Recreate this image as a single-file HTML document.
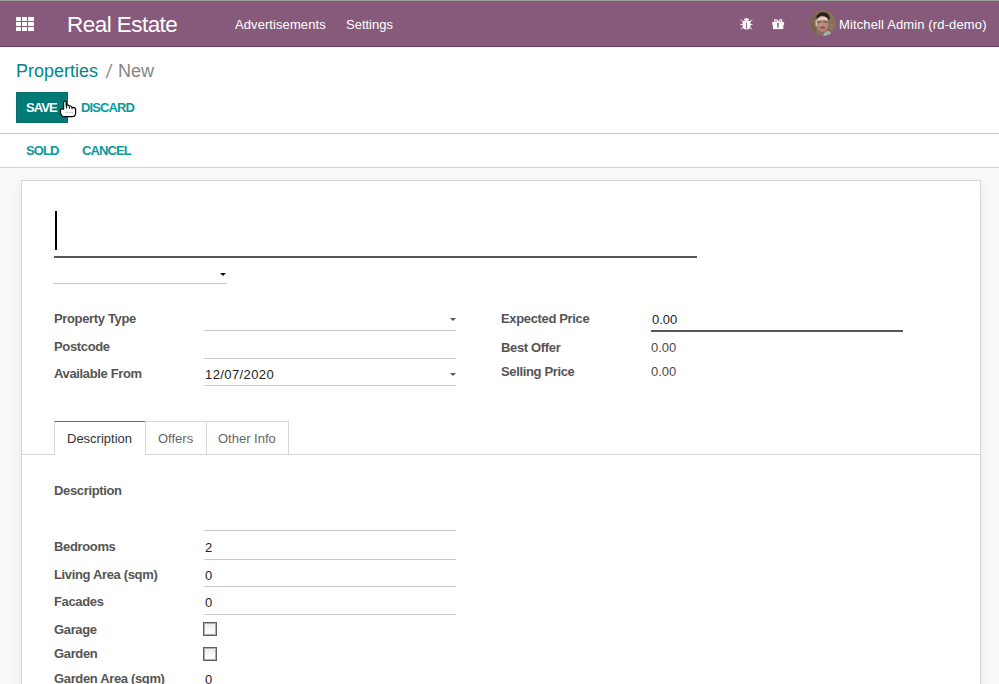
<!DOCTYPE html>
<html><head><meta charset="utf-8">
<style>
*{box-sizing:border-box;margin:0;padding:0}
html,body{width:999px;height:684px;overflow:hidden;background:#fff}
body{position:relative;font-family:"Liberation Sans",sans-serif;font-size:13px;color:#4c4c4c}
.a{position:absolute;white-space:nowrap;line-height:13px}
#topline{position:absolute;left:0;top:0;width:999px;height:1px;background:#9ba09b}
#nav{position:absolute;left:0;top:1px;width:999px;height:46px;background:#875A7B;border-bottom:1px solid #663f5c}
.gsq{position:absolute;background:#fff;width:5px;height:4px}
.navt{color:#fff}
#cp{position:absolute;left:0;top:47px;width:999px;height:87px;background:#fff;border-bottom:1px solid #c9c9c9}
#status{position:absolute;left:0;top:134px;width:999px;height:34px;background:#fff;border-bottom:1px solid #cfd4da}
#bg{position:absolute;left:0;top:168px;width:999px;height:516px;background:#f9f9f9}
#sheet{position:absolute;left:21px;top:180px;width:960px;height:520px;background:#fff;border:1px solid #d3d7dc;box-shadow:0 4px 10px rgba(0,0,0,0.08)}
.lbl{font-weight:bold;color:#555;letter-spacing:-0.35px}
.ln{position:absolute;height:1px;background:#c8c8c8}
.lnd{position:absolute;height:2px;background:#585858}
.caret{position:absolute;width:0;height:0;border-left:3px solid transparent;border-right:3px solid transparent;border-top:3px solid #555}
.val{color:#222}
.ro{color:#4c4c4c}
.teal{color:#01878a}
.teal2{color:#0a9a9c}
.chk{position:absolute;width:14px;height:14px;border:1px solid #5e5e5e;box-shadow:inset 0 0 0 1px #a9b0b6;background:linear-gradient(#e6e9ec,#fdfdfd 70%,#f5f6f7)}
</style></head><body>
<div id="topline"></div>
<div id="nav">
  <div class="gsq" style="left:16px;top:16px"></div>
  <div class="gsq" style="left:22px;top:16px"></div>
  <div class="gsq" style="left:28px;top:16px;width:6px"></div>
  <div class="gsq" style="left:16px;top:21px"></div>
  <div class="gsq" style="left:22px;top:21px"></div>
  <div class="gsq" style="left:28px;top:21px;width:6px"></div>
  <div class="gsq" style="left:16px;top:26px"></div>
  <div class="gsq" style="left:22px;top:26px"></div>
  <div class="gsq" style="left:28px;top:26px;width:6px"></div>
</div>
<div class="a navt" style="left:67px;top:14px;font-size:22.5px;line-height:22.5px;letter-spacing:-0.55px">Real Estate</div>
<div class="a navt" style="left:235px;top:18px;letter-spacing:0.08px">Advertisements</div>
<div class="a navt" style="left:346px;top:18px">Settings</div>
<div class="a navt" style="left:839px;top:18px;letter-spacing:0.13px">Mitchell Admin (rd-demo)</div>

<div id="cp"></div>
<div id="status"></div>
<div id="bg"></div>
<div id="sheet"></div>

<!-- breadcrumb -->
<div class="a teal" style="left:16px;top:62px;font-size:18px;line-height:18px">Properties</div>
<div class="a" style="left:105px;top:63px;font-size:18px;line-height:18px;color:#888;transform:skewX(-8deg) scaleY(1.08);transform-origin:0 100%">/</div>
<div class="a" style="left:118px;top:62px;font-size:18px;line-height:18px;color:#848484">New</div>

<!-- buttons -->
<div style="position:absolute;left:16px;top:92px;width:52px;height:31px;background:#007a74;border:1px solid #0b6a6c"></div>
<div class="a" style="left:26px;top:101px;color:#fff;font-weight:bold;letter-spacing:-0.9px">SAVE</div>
<div class="a teal2" style="left:81px;top:101px;font-weight:bold;letter-spacing:-0.9px">DISCARD</div>
<div class="a teal2" style="left:26px;top:144px;font-weight:bold;letter-spacing:-0.9px">SOLD</div>
<div class="a teal2" style="left:82px;top:144px;font-weight:bold;letter-spacing:-0.9px">CANCEL</div>

<!-- title -->
<div style="position:absolute;left:55px;top:211px;width:2px;height:39px;background:#000"></div>
<div class="lnd" style="left:54px;top:256px;width:643px"></div>
<div class="caret" style="left:220px;top:273px;border-top-color:#111"></div>
<div class="ln" style="left:54px;top:283px;width:172px"></div>

<!-- group left -->
<div class="a lbl" style="left:54px;top:312px">Property Type</div>
<div class="a lbl" style="left:54px;top:340px">Postcode</div>
<div class="a lbl" style="left:54px;top:367px">Available From</div>
<div class="caret" style="left:450px;top:318px"></div>
<div class="ln" style="left:204px;top:330px;width:252px"></div>
<div class="ln" style="left:204px;top:358px;width:252px"></div>
<div class="a val" style="left:205px;top:368px;letter-spacing:0.4px">12/07/2020</div>
<div class="caret" style="left:450px;top:373px"></div>
<div class="ln" style="left:204px;top:385px;width:252px"></div>

<!-- group right -->
<div class="a lbl" style="left:501px;top:312px">Expected Price</div>
<div class="a lbl" style="left:501px;top:341px">Best Offer</div>
<div class="a lbl" style="left:501px;top:365px">Selling Price</div>
<div class="a val" style="left:652px;top:313px">0.00</div>
<div class="lnd" style="left:651px;top:330px;width:252px"></div>
<div class="a ro" style="left:651px;top:341px">0.00</div>
<div class="a ro" style="left:651px;top:365px">0.00</div>

<!-- tabs -->
<div class="ln" style="left:22px;top:454px;width:958px;background:#d3d7dc"></div>
<div style="position:absolute;left:54px;top:421px;width:92px;height:34px;background:#fff;border:1px solid #d3d7dc;border-top:1px solid #875A7B;border-bottom:none"></div>
<div style="position:absolute;left:145px;top:421px;width:62px;height:34px;border:1px solid #d3d7dc;border-bottom:none"></div>
<div style="position:absolute;left:206px;top:421px;width:83px;height:34px;border:1px solid #d3d7dc;border-bottom:none"></div>
<div class="a" style="left:67px;top:432px;color:#333">Description</div>
<div class="a" style="left:158px;top:432px;color:#666">Offers</div>
<div class="a" style="left:218px;top:432px;color:#666">Other Info</div>

<!-- description page -->
<div class="a lbl" style="left:54px;top:484px">Description</div>
<div class="ln" style="left:204px;top:530px;width:252px"></div>
<div class="a lbl" style="left:54px;top:540px">Bedrooms</div>
<div class="a val" style="left:205px;top:541px">2</div>
<div class="ln" style="left:204px;top:559px;width:252px"></div>
<div class="a lbl" style="left:54px;top:568px">Living Area (sqm)</div>
<div class="a val" style="left:205px;top:569px">0</div>
<div class="ln" style="left:204px;top:586px;width:252px"></div>
<div class="a lbl" style="left:54px;top:595px">Facades</div>
<div class="a val" style="left:205px;top:596px">0</div>
<div class="ln" style="left:204px;top:614px;width:252px"></div>
<div class="a lbl" style="left:54px;top:623px">Garage</div>
<div class="chk" style="left:203px;top:622px"></div>
<div class="a lbl" style="left:54px;top:647px">Garden</div>
<div class="chk" style="left:203px;top:647px"></div>
<div class="a lbl" style="left:54px;top:672px">Garden Area (sqm)</div>
<div class="a val" style="left:205px;top:673px">0</div>


<!-- icons -->
<svg style="position:absolute;left:740px;top:17px" width="13" height="13" viewBox="0 0 13 13">
  <ellipse cx="6.5" cy="2.4" rx="2.4" ry="1.25" fill="#fff"/>
  <path d="M2.6,5 Q2.6,3.8 3.8,3.8 L9.2,3.8 Q10.5,3.8 10.5,5 L10.5,9 Q10.5,12.4 6.5,12.4 Q2.6,12.4 2.6,9 Z" fill="#fff"/>
  <rect x="6.1" y="5.6" width="0.9" height="6" fill="#875A7B"/>
  <g stroke="#fff" stroke-width="0.9" stroke-linecap="round">
    <line x1="3" y1="5" x2="1" y2="2.8"/><line x1="10" y1="5" x2="12" y2="2.8"/>
    <line x1="2.6" y1="7.6" x2="0.7" y2="7.6"/><line x1="10.4" y1="7.6" x2="12.2" y2="7.6"/>
    <line x1="3" y1="10.4" x2="1.2" y2="12"/><line x1="10" y1="10.4" x2="11.8" y2="12"/>
  </g>
</svg>
<svg style="position:absolute;left:771px;top:18px" width="15" height="12" viewBox="0 0 15 12">
  <path d="M7.1,4.1 C6.4,2.2 5.5,1.4 4.6,1.5 C3.5,1.6 3.3,2.9 4,3.6 C4.5,4 5.5,4.2 7.1,4.1 Z" fill="none" stroke="#fff" stroke-width="1.1"/>
  <path d="M7.3,4.1 C8,2.2 8.9,1.4 9.8,1.5 C10.9,1.6 11.1,2.9 10.4,3.6 C9.9,4 8.9,4.2 7.3,4.1 Z" fill="none" stroke="#fff" stroke-width="1.1"/>
  <rect x="1.2" y="4.1" width="11.9" height="2.8" fill="#fff"/>
  <rect x="2" y="6.8" width="10.3" height="4.3" fill="#fff"/>
  <rect x="6.2" y="4.7" width="1.5" height="5" fill="#875A7B"/>
</svg>
<svg style="position:absolute;left:810px;top:10px" width="26" height="26" viewBox="0 0 26 26">
  <defs><clipPath id="cc"><circle cx="13" cy="13" r="13"/></clipPath>
  <radialGradient id="fg" cx="0.5" cy="0.45" r="0.6"><stop offset="0" stop-color="#c79580"/><stop offset="0.7" stop-color="#b68a76"/><stop offset="1" stop-color="#8f7465"/></radialGradient></defs>
  <g clip-path="url(#cc)">
    <rect width="26" height="26" fill="#86705c"/>
    <rect x="0" y="0" width="6" height="26" fill="#7a6250"/>
    <rect x="21" y="14" width="1.5" height="1.5" fill="#d08040"/>
    <rect x="21" y="17" width="1.5" height="1.5" fill="#d08040"/>
    <rect x="2" y="12" width="3" height="1" fill="#a07050"/>
    <path d="M6,8 Q7,2 13.5,2.2 Q19.5,2.5 20,8.5 L18.8,10 Q14,5.5 8,8.5 Z" fill="#2a211f"/>
    <ellipse cx="12.3" cy="14" rx="6.2" ry="8.2" fill="url(#fg)"/>
    <path d="M7.5,8.5 Q12,5.5 17.5,8 L17.8,10.5 Q12,9 7.3,11 Z" fill="#ddd0cc"/>
    <path d="M7,12 L11.5,12 M13,12 L17.8,12" stroke="#4a3535" stroke-width="0.9"/>
    <ellipse cx="12.5" cy="17.5" rx="2.8" ry="1.6" fill="#9a5a60"/>
    <path d="M13,26 Q14,22 17,21 Q21,21 22,26 Z" fill="#9fb0b0"/>
    <rect x="5.5" y="10" width="1.5" height="6" fill="#e5e0e0" opacity="0.7"/>
  </g>
</svg>
<!-- hand cursor -->
<svg style="position:absolute;left:59px;top:99px" width="18" height="19" viewBox="0 0 18 19">
  <path d="M4.6,10.2 L4.6,3.4 Q4.6,2 5.9,2 Q7.2,2 7.2,3.4 L7.2,6.8 Q7.4,5.8 8.6,5.8 Q9.9,5.8 10.2,7.2 Q10.6,6.8 11.6,7 Q12.8,7.2 13,8.6 Q13.4,8.2 14.4,8.4 Q16.6,8.7 16.6,10.6 L16.6,14 Q16.6,17.6 13.4,17.6 L5.4,17.6 Q2.2,17.6 1.6,14 L1.4,11.5 Q1.4,9.4 4.6,10.2 Z" fill="#fff" stroke="#000" stroke-width="1.2" stroke-linejoin="round"/>
  <g stroke="#000" stroke-width="1"><line x1="7.6" y1="6.8" x2="7.6" y2="9.5"/><line x1="10.4" y1="7.6" x2="10.4" y2="9.8"/><line x1="13.1" y1="8.8" x2="13.1" y2="10.2"/></g><g stroke="#888" stroke-width="0.8" stroke-dasharray="0.8 0.8"><line x1="6.5" y1="13.6" x2="14" y2="13.6"/></g>
</svg>
</body></html>
